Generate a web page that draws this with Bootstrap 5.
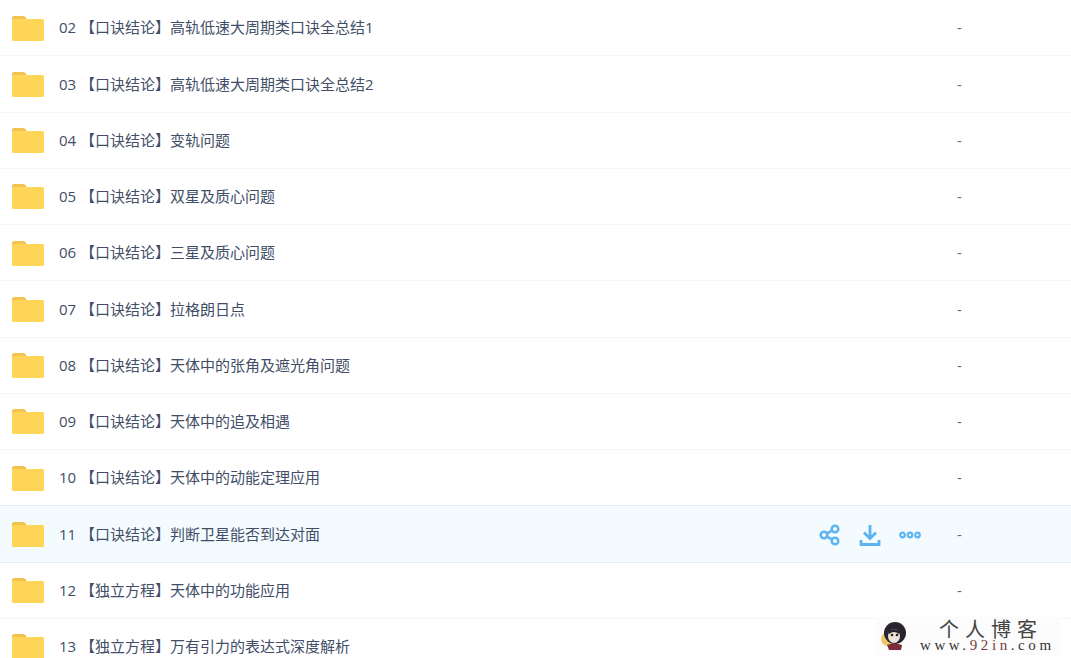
<!DOCTYPE html>
<html lang="zh-CN">
<head>
    <meta charset="UTF-8">
    <title>文件列表</title>
    <link href="https://cdn.jsdelivr.net/npm/bootstrap@5.3.0/dist/css/bootstrap.min.css" rel="stylesheet">
    <style>
        html, body {
            height: 658px;
            overflow: hidden;
            background: #fff;
        }
        .file-list {
            font-family: "Open Sans", "Noto Sans CJK SC", sans-serif;
            font-size: 15px;
            color: #424e67;
        }
        .file-row {
            height: 56.25px;
            border-bottom: 1px solid #f2f6fd;
            padding-left: 12px;
        }
        .file-row.active-row {
            background: #f4fbff;
            border-top: 1px solid #dfeefb;
            border-bottom: 1px solid #dfeefb;
            margin-top: -1px;
            height: 57.25px;
        }
        .folder-ico {
            width: 32px;
            height: 26px;
            flex: none;
        }
        .file-name {
            margin-left: 15px;
            flex: 1;
            white-space: nowrap;
        }
        .row-tools {
            width: 120px;
            color: #5cb4f2;
            gap: 18px;
            margin-right: 18px;
            margin-top: 3px;
        }
        .file-size {
            width: 14px;
            margin-right: 100px;
            color: #666;
        }
        .site-mark {
            position: absolute;
            left: 876px;
            top: 617px;
            width: 184px;
            height: 38px;
            background: #fcfcfc;
        }
        .mark-title {
            position: absolute;
            left: 63px;
            top: 3px;
            font: 20px/17px "Noto Sans CJK SC", sans-serif;
            letter-spacing: 6px;
            color: #444;
            white-space: nowrap;
        }
        .mark-url {
            position: absolute;
            left: 44px;
            top: 21px;
            font: 15px/15px "Liberation Serif", serif;
            letter-spacing: 3.6px;
            color: #333;
            white-space: nowrap;
        }
        .mark-url b {
            font-weight: 400;
            color: #7a3b3b;
        }
        .mark-face {
            position: absolute;
            left: 4px;
            top: 4px;
        }
    </style>
</head>
<body>

<div class="file-list" id="lista"></div>

<div class="site-mark">
    <svg class="mark-face" width="28" height="30" viewBox="0 0 28 30">
        <circle cx="8" cy="18" r="7" fill="#efc766"/>
        <circle cx="15" cy="12" r="11" fill="#2a2430"/>
        <ellipse cx="14" cy="15" rx="6" ry="7" fill="#efe2d8"/>
        <path d="M8 11 Q14 5 20 11 L19 13 Q14 9 9 13Z" fill="#2a2430"/>
        <circle cx="12" cy="14" r="1.3" fill="#222"/>
        <circle cx="17" cy="14" r="1.3" fill="#222"/>
        <path d="M7 24 Q14 21 22 24 L21 29 H9Z" fill="#7e2b3a"/>
    </svg>
    <div class="mark-title">个人博客</div>
    <div class="mark-url">www.<b>92in</b>.com</div>
</div>

<script>
const ficheiros = [
    ["02", "【口诀结论】高轨低速大周期类口诀全总结1"],
    ["03", "【口诀结论】高轨低速大周期类口诀全总结2"],
    ["04", "【口诀结论】变轨问题"],
    ["05", "【口诀结论】双星及质心问题"],
    ["06", "【口诀结论】三星及质心问题"],
    ["07", "【口诀结论】拉格朗日点"],
    ["08", "【口诀结论】天体中的张角及遮光角问题"],
    ["09", "【口诀结论】天体中的追及相遇"],
    ["10", "【口诀结论】天体中的动能定理应用"],
    ["11", "【口诀结论】判断卫星能否到达对面"],
    ["12", "【独立方程】天体中的功能应用"],
    ["13", "【独立方程】万有引力的表达式深度解析"]
];

const pasta = `<svg class="folder-ico" viewBox="0 0 32 26">
    <path d="M0 3 a2 2 0 0 1 2-2 h9 a3 3 0 0 1 3 2 l1 2 H0Z" fill="#f0c44f"/>
    <rect x="0" y="4" width="32" height="22" rx="1.5" fill="#ffd558"/>
</svg>`;

const ferramentas = `<div class="row-tools d-flex align-items-center">
    <svg width="22" height="22" viewBox="0 0 22 22" fill="none" stroke="currentColor" stroke-width="2.5">
        <circle cx="5" cy="11" r="3.3"/><circle cx="16" cy="5" r="3.3"/><circle cx="16" cy="17" r="3.3"/>
        <path d="M8 9.4 13 6.7M8 12.6 13 15.3"/>
    </svg>
    <svg width="22" height="22" viewBox="0 0 22 22" fill="none" stroke="currentColor" stroke-width="2.8">
        <path d="M11 1v13M5 8.5l6 6 6-6"/><path d="M2 16v4.5h18V16"/>
    </svg>
    <svg width="22" height="10" viewBox="0 0 22 10" fill="none" stroke="currentColor" stroke-width="2.2">
        <circle cx="3.5" cy="5" r="2.3"/><circle cx="11" cy="5" r="2.3"/><circle cx="18.5" cy="5" r="2.3"/>
    </svg>
</div>`;

document.getElementById('lista').innerHTML = ficheiros.map(f => {
    const ativo = f[0] === "11";
    // a linha 13 fica atras da marca do site, o traco nao aparece
    const tamanho = f[0] === "13" ? "" : "-";
    return `<div class="file-row d-flex align-items-center ${ativo ? 'active-row' : ''}">
        ${pasta}
        <span class="file-name">${f[0]} ${f[1]}</span>
        ${ativo ? ferramentas : ''}
        <span class="file-size">${tamanho}</span>
    </div>`;
}).join('');
</script>

<script src="https://cdn.jsdelivr.net/npm/bootstrap@5.3.0/dist/js/bootstrap.bundle.min.js"></script>
</body>
</html>
